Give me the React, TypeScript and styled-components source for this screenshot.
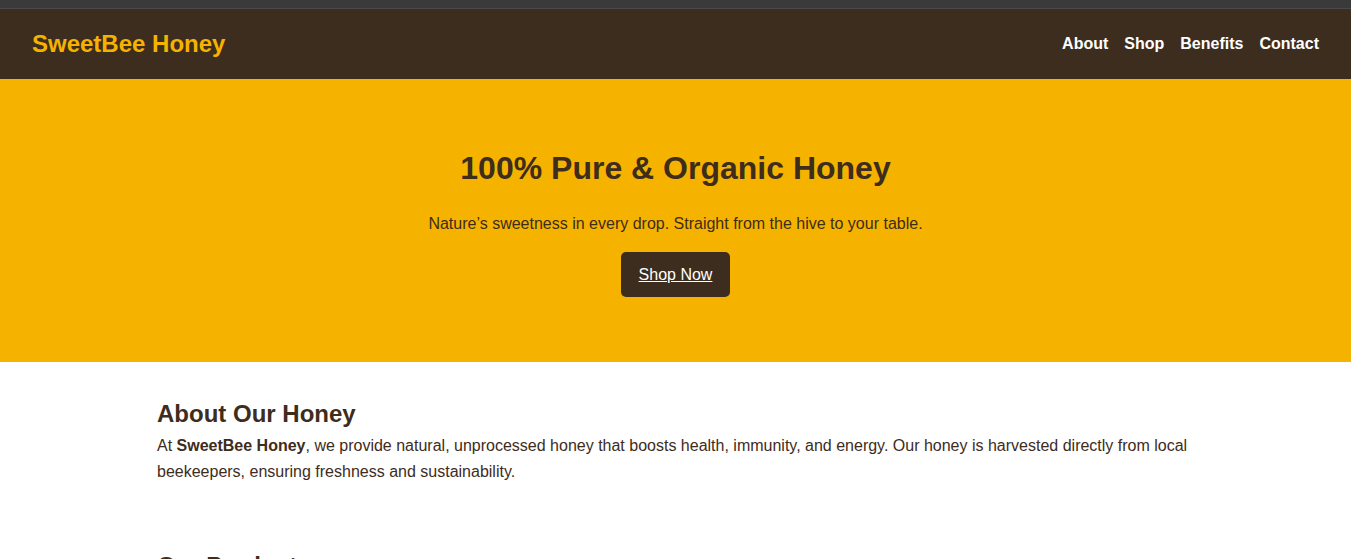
import React from "react";
import styled, { createGlobalStyle } from "styled-components";

const GlobalStyle = createGlobalStyle`
  html, body { margin: 0; padding: 0; background: #ffffff; }
  body {
    font-family: "Liberation Sans", Arial, sans-serif;
    color: #3e2c1c;
    line-height: 1.6;
  }
  * { box-sizing: border-box; }
`;

const TopStrip = styled.div`
  height: 9px;
  background: #3a3a3a;
  border-bottom: 1px solid #4a4a4a;
`;

const Header = styled.header`
  height: 70px;
  background: #3d2d1e;
  display: flex;
  align-items: center;
  justify-content: space-between;
  padding: 0 32px;
`;

const Logo = styled.div`
  color: #f5b300;
  font-size: 24px;
  font-weight: 700;
  line-height: 1;
  margin-top: 0;
`;

const Nav = styled.nav`
  display: flex;
  gap: 16px;
  margin-top: -1px;
`;

const NavLink = styled.a`
  color: #ffffff;
  font-size: 16px;
  font-weight: 700;
  text-decoration: none;
  line-height: 1;
`;

const Hero = styled.section`
  background: #f5b300;
  display: flex;
  flex-direction: column;
  align-items: center;
  text-align: center;
  padding: 64px 20px 65px;
`;

const HeroTitle = styled.h1`
  margin: 0;
  font-size: 32px;
  line-height: 1.6;
  color: #3e2c1c;
`;

const HeroText = styled.p`
  margin: 17px 0 15px;
  font-size: 16px;
  color: #3e2c1c;
`;

const ShopButton = styled.a`
  display: inline-block;
  background: #3d2d1e;
  color: #ffffff;
  font-size: 16px;
  padding: 10px 18px;
  border-radius: 5px;
  text-decoration: underline;
`;

const Section = styled.section`
  max-width: 1037px;
  margin: 0 auto;
  padding: 34px 0 29px;
`;

const SectionTitle = styled.h2`
  margin: 0 0 1px;
  font-size: 24px;
  line-height: 1.5;
  color: #3e2c1c;
`;

const SectionText = styled.p`
  margin: 0;
  font-size: 16px;
  color: #3e2c1c;
`;

export default function App() {
  return (
    <>
      <GlobalStyle />
      <TopStrip />
      <Header>
        <Logo>SweetBee Honey</Logo>
        <Nav>
          <NavLink href="#about">About</NavLink>
          <NavLink href="#shop">Shop</NavLink>
          <NavLink href="#benefits">Benefits</NavLink>
          <NavLink href="#contact">Contact</NavLink>
        </Nav>
      </Header>
      <Hero>
        <HeroTitle>100% Pure &amp; Organic Honey</HeroTitle>
        <HeroText>Nature’s sweetness in every drop. Straight from the hive to your table.</HeroText>
        <ShopButton href="#shop">Shop Now</ShopButton>
      </Hero>
      <Section id="about">
        <SectionTitle>About Our Honey</SectionTitle>
        <SectionText>
          At <strong>SweetBee Honey</strong>, we provide natural, unprocessed honey that boosts health, immunity, and energy. Our honey is harvested directly from local beekeepers, ensuring freshness and sustainability.
        </SectionText>
      </Section>
      <Section id="shop">
        <SectionTitle>Our Products</SectionTitle>
      </Section>
    </>
  );
}
